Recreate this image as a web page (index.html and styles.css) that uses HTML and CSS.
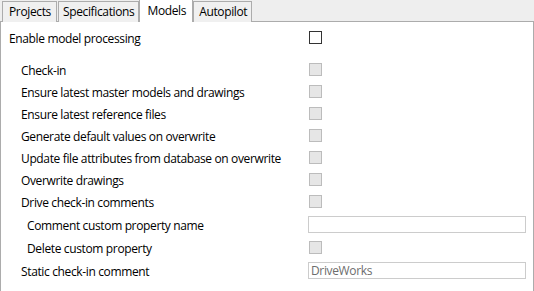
FILE: index.html
```html
<!DOCTYPE html>
<html>
<head>
<meta charset="utf-8">
<link rel="stylesheet" href="styles.css">
</head>
<body>
<div class="tabs">
  <div class="tab">Projects</div>
  <div class="tab spec">Specifications</div>
  <div class="tab active">Models</div>
  <div class="tab auto">Autopilot</div>
</div>
<div class="panel">
  <div class="row top"><span class="label">Enable model processing</span><span class="cb on"></span></div>
  <div class="group">
    <div class="row"><span class="label">Check-in</span><span class="cb"></span></div>
    <div class="row"><span class="label">Ensure latest master models and drawings</span><span class="cb"></span></div>
    <div class="row"><span class="label">Ensure latest reference files</span><span class="cb"></span></div>
    <div class="row"><span class="label">Generate default values on overwrite</span><span class="cb"></span></div>
    <div class="row"><span class="label">Update file attributes from database on overwrite</span><span class="cb"></span></div>
    <div class="row"><span class="label">Overwrite drawings</span><span class="cb"></span></div>
    <div class="row"><span class="label">Drive check-in comments</span><span class="cb"></span></div>
    <div class="row tall sub"><span class="label">Comment custom property name</span><span class="tb"></span></div>
    <div class="row sub"><span class="label">Delete custom property</span><span class="cb"></span></div>
    <div class="row tall"><span class="label">Static check-in comment</span><span class="tb">DriveWorks</span></div>
  </div>
</div>
</body>
</html>
```
FILE: styles.css
```css
html, body {
  margin: 0;
  padding: 0;
  background: #ffffff;
}
body {
  font-family: "Open Sans", "Noto Sans", sans-serif;
  font-size: 12px;
  color: #000;
  width: 534px;
  height: 291px;
  overflow: hidden;
  letter-spacing: -0.36px;
}
.tabs {
  display: flex;
  align-items: flex-end;
  height: 22px;
  background: #eeeeee;
  padding-left: 2px;
  box-sizing: border-box;
  border-bottom: 1px solid #acacac;
}
.tab {
  box-sizing: border-box;
  border: 1px solid #acacac;
  border-bottom: none;
  background: #f0f0f0;
  padding: 0 5px 0 6px;
  line-height: 20px;
  margin-right: 1px;
  margin-bottom: -1px;
  height: 21px;
}
.tab.spec {
  margin-right: 0;
  padding: 0 4px 0 4px;
}
.tab.auto {
  padding: 0 4px 0 5px;
}
.tab.active {
  background: #ffffff;
  height: 23px;
  line-height: 21px;
  padding: 0 6px 0 7px;
  margin-right: 0;
}
.panel {
  border-left: 1px solid #acacac;
  border-right: 1px solid #acacac;
  height: 269px;
  box-sizing: border-box;
  padding: 4px 8px 0 8px;
}
.row {
  display: grid;
  grid-template-columns: 299px 1fr;
  align-items: center;
  height: 22px;
}
.label {
  padding-top: 3px;
  white-space: nowrap;
}
.group {
  margin-top: 10px;
  padding-left: 12px;
}
.group .row {
  grid-template-columns: 287px 1fr;
}
.row.tall { height: 24px; }
.row.sub .label { padding-left: 6px; }
.cb {
  width: 13px;
  height: 13px;
  box-sizing: border-box;
  border: 1px solid #bcbcbc;
  background: #e6e6e6;
  margin-left: 1px;
}
.cb.on {
  border-color: #333333;
  background: #ffffff;
}
.tb {
  height: 17px;
  box-sizing: border-box;
  border: 1px solid #cccccc;
  width: 218px;
  color: #6d6d6d;
  font-size: 12px;
  line-height: 15px;
  padding-left: 2px;
}
```
